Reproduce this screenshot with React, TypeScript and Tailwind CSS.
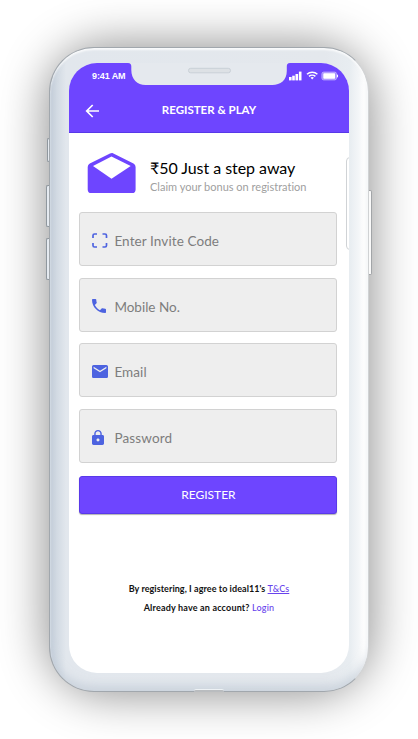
import type { ReactNode } from 'react';

function Field({ label, spacing, children }: { label: string; spacing: string; children: ReactNode }) {
  return (
    <label className="flex h-[54px] w-[258px] items-center rounded-[3px] border border-[#d2d2d2] bg-[#eeeeee] pt-[4px]">
      <span className="flex h-5 w-[34px] shrink-0 items-center pb-[2px] pl-[12px] text-[#4d63e0]">{children}</span>
      <span className={`${spacing} whitespace-nowrap text-[13.5px] leading-5 text-[#7d7d7d]`}>{label}</span>
    </label>
  );
}

function StatusIcons() {
  return (
    <svg width="50" height="10" viewBox="0 0 50 10" fill="#fff">
      <rect x="0" y="6" width="2.6" height="3.4" />
      <rect x="3.2" y="4.7" width="2.6" height="4.7" />
      <rect x="6.5" y="3" width="2.6" height="6.4" />
      <rect x="9.9" y="0.6" width="2.6" height="8.8" />
      <g fill="none" stroke="#fff" strokeWidth="1.5">
        <path d="M18 3.3a7.5 7.5 0 0 1 10.4 0" />
        <path d="M20 5.4a4.7 4.7 0 0 1 6.4 0" />
      </g>
      <path d="M21.5 6.6a2.7 2.7 0 0 1 3.4 0l-1.7 1.8z" />
      <rect x="32.9" y="1.1" width="14.6" height="7.8" rx="1.8" fill="#fff" fillOpacity=".35" stroke="#c4b7ff" strokeWidth=".8" />
      <rect x="34.3" y="2.3" width="11.8" height="5.4" rx=".7" />
      <path d="M48 3.3c1.5.5 1.5 2.9 0 3.4z" />
    </svg>
  );
}

function Notch() {
  return (
    <svg className="absolute left-[59px] top-0" width="162" height="23" viewBox="0 0 162 23">
      <path d="M0 0C2.4.2 3.3 1.2 3.3 3.5V7c0 9 6 15 14.2 15h126.8c8.2 0 14.5-5 14.5-14V3.5c0-2.3.8-3.3 3.2-3.5z" fill="#e5e9ee" />
      <rect x="60.5" y="5.3" width="42" height="4.5" rx="2.2" fill="#dde1e5" stroke="#c9d0d7" />
    </svg>
  );
}

export default function App() {
  return (
    <main className="relative h-[739px] w-[418px] overflow-hidden bg-white pl-[49px] pt-[47px] font-['Lato','Noto_Sans',sans-serif] [font-variant-ligatures:none]">
      <i className="absolute left-[69px] top-[67px] h-[605px] w-[280px] rounded-[40px] shadow-[0_0_46px_24px_rgba(0,0,0,0.42)]" />
      <i className="absolute left-[47px] top-[138px] h-6 w-[4px] rounded-l-[2px] border border-r-0 border-[#8f979e] bg-[#e5eaf0]" />
      <i className="absolute left-[46px] top-[185px] h-[42px] w-[5px] rounded-l-[2px] border border-r-0 border-[#8f979e] bg-[#e5eaf0]" />
      <i className="absolute left-[46px] top-[238px] h-[42px] w-[5px] rounded-l-[2px] border border-r-0 border-[#8f979e] bg-[#e5eaf0]" />
      <i className="absolute left-[367px] top-[190px] h-[85px] w-[5px] rounded-r-[2px] border border-l-0 border-[#a2a5a8] bg-[#fafafa]" />
      <div className="relative h-[645px] w-[320px] rounded-[45px] border border-[#a1a7ad] border-r-[#d0d2d4] bg-[linear-gradient(90deg,#c4ceda_0px,#d2dae3_7px,#e2e7ed_16px,#e4e8ed_275px,#e8edf1_300px,#f4f6f8_309px,#fff_314px)] px-[19px] pt-[15px] shadow-[inset_0_2px_2px_rgba(255,255,255,0.8),inset_0_-8px_8px_-2px_rgba(190,200,212,0.6)]">
        <div className="relative h-[610px] w-[280px] overflow-hidden rounded-[28px] bg-white">
          <Notch />
          <header className="h-[70px] border-b border-[#5738e8] bg-[#6e45ff] text-white">
            <div className="flex h-[29px] items-start justify-between pl-[23px] pr-[10px] pt-[8px]">
              <span className="font-['Liberation_Sans',sans-serif] text-[9px] font-bold leading-[11px] tracking-[-0.1px]">9:41 AM</span>
              <StatusIcons />
            </div>
            <div className="relative flex h-[38px] items-center justify-center">
              <svg className="absolute left-[16px] top-[12px]" width="15" height="14" viewBox="0 0 15 14" fill="none" stroke="#fff" strokeWidth="1.7">
                <path d="M14 7H2M7.7 1 1.7 7l6 6" />
              </svg>
              <h1 className="-mt-[2px] text-[11.5px] font-bold leading-4 tracking-[0px]">REGISTER &amp; PLAY</h1>
            </div>
          </header>
          <div className="flex h-[79px] items-start pl-[18px] pt-[19px]">
            <svg className="shrink-0" width="50" height="42" viewBox="0 0 50 42">
              <path d="M25.4 1 46.5 11.5Q48.6 12.8 48.6 15v22.4Q48.6 41 45 41H4.2Q.7 41 .7 37.4V15Q.7 12.8 2.8 11.5L23 1.6Q24.2.8 25.4 1Z" fill="#6e45ff" />
              <path d="M24.5 4.5 43.7 14 24.5 26.8 6 14Z" fill="#fff" />
            </svg>
            <div className="ml-[13px] pt-[6px]">
              <h2 className="whitespace-nowrap text-[16px] leading-5 tracking-[-0.05px] text-black">₹50 Just a step away</h2>
              <p className="whitespace-nowrap pt-px text-[11px] leading-[16px] text-[#a0a0a0]">Claim your bonus on registration</p>
            </div>
          </div>
          <form className="flex flex-col gap-[11.7px] pl-[10.4px]">
            <Field label="Enter Invite Code" spacing="tracking-[0.1px]">
              <svg width="16" height="15" viewBox="0 0 16 15" fill="none" stroke="currentColor" strokeWidth="1.7">
                <path d="M1 5V2.5Q1 1 2.5 1H5M10.5 1H13Q14.5 1 14.5 2.5V5M14.5 10v2.5Q14.5 14 13 14h-2.5M5 14H2.5Q1 14 1 12.5V10" />
              </svg>
            </Field>
            <Field label="Mobile No." spacing="tracking-[0px]">
              <svg width="14" height="14" viewBox="3 3 18 18" fill="currentColor">
                <path d="M6.62 10.79c1.44 2.83 3.76 5.14 6.59 6.59l2.2-2.2c.27-.27.67-.36 1.02-.24 1.12.37 2.33.57 3.57.57.55 0 1 .45 1 1V20c0 .55-.45 1-1 1-9.39 0-17-7.61-17-17 0-.55.45-1 1-1h3.5c.55 0 1 .45 1 1 0 1.25.2 2.45.57 3.57.11.35.03.74-.25 1.02z" />
              </svg>
            </Field>
            <Field label="Email" spacing="tracking-[0.1px]">
              <svg width="16" height="13" viewBox="2 4 20 16" preserveAspectRatio="none" fill="currentColor">
                <path d="M20 4H4c-1.1 0-2 .9-2 2v12c0 1.1.9 2 2 2h16c1.1 0 2-.9 2-2V6c0-1.1-.9-2-2-2m0 4-8 5-8-5V6l8 5 8-5z" />
              </svg>
            </Field>
            <Field label="Password" spacing="tracking-[0.15px]">
              <svg width="12" height="15" viewBox="4 1 16 21" preserveAspectRatio="none" fill="currentColor">
                <path d="M18 8h-1V6c0-2.76-2.24-5-5-5S7 3.24 7 6v2H6c-1.1 0-2 .9-2 2v10c0 1.1.9 2 2 2h12c1.1 0 2-.9 2-2V10c0-1.1-.9-2-2-2m-6 9c-1.1 0-2-.9-2-2s.9-2 2-2 2 .9 2 2-.9 2-2 2m3.1-9H8.9V6c0-1.71 1.39-3.1 3.1-3.1s3.1 1.39 3.1 3.1z" />
              </svg>
            </Field>
            <button type="button" className="mt-[1px] h-[38px] w-[258px] rounded-[3px] border border-[#5939e9] bg-[#6e45ff] text-[12px] text-white shadow-[0_1px_1px_rgba(0,0,0,0.3)]">REGISTER</button>
          </form>
          <footer className="mt-[65.5px] flex flex-col items-center text-[9px] font-bold leading-[19px] text-[#111]">
            <p className="tracking-[0.06px]">By registering, I agree to ideal11's <a className="font-medium text-[#6843ed] underline">T&amp;Cs</a></p>
            <p className="tracking-[0.18px]">Already have an account? <a className="font-medium text-[#6843ed]">Login</a></p>
          </footer>
          <i className="absolute left-[277px] top-[94px] h-[93px] w-[6px] rounded-l-[4px] border border-[#d0d3d6] bg-white" />
        </div>
        <i className="absolute bottom-[-1px] left-[144px] h-[3px] w-[30px] rounded-t-[2px] border-t border-[#eef2f5] bg-[#b9bcbf]" />
      </div>
    </main>
  );
}
